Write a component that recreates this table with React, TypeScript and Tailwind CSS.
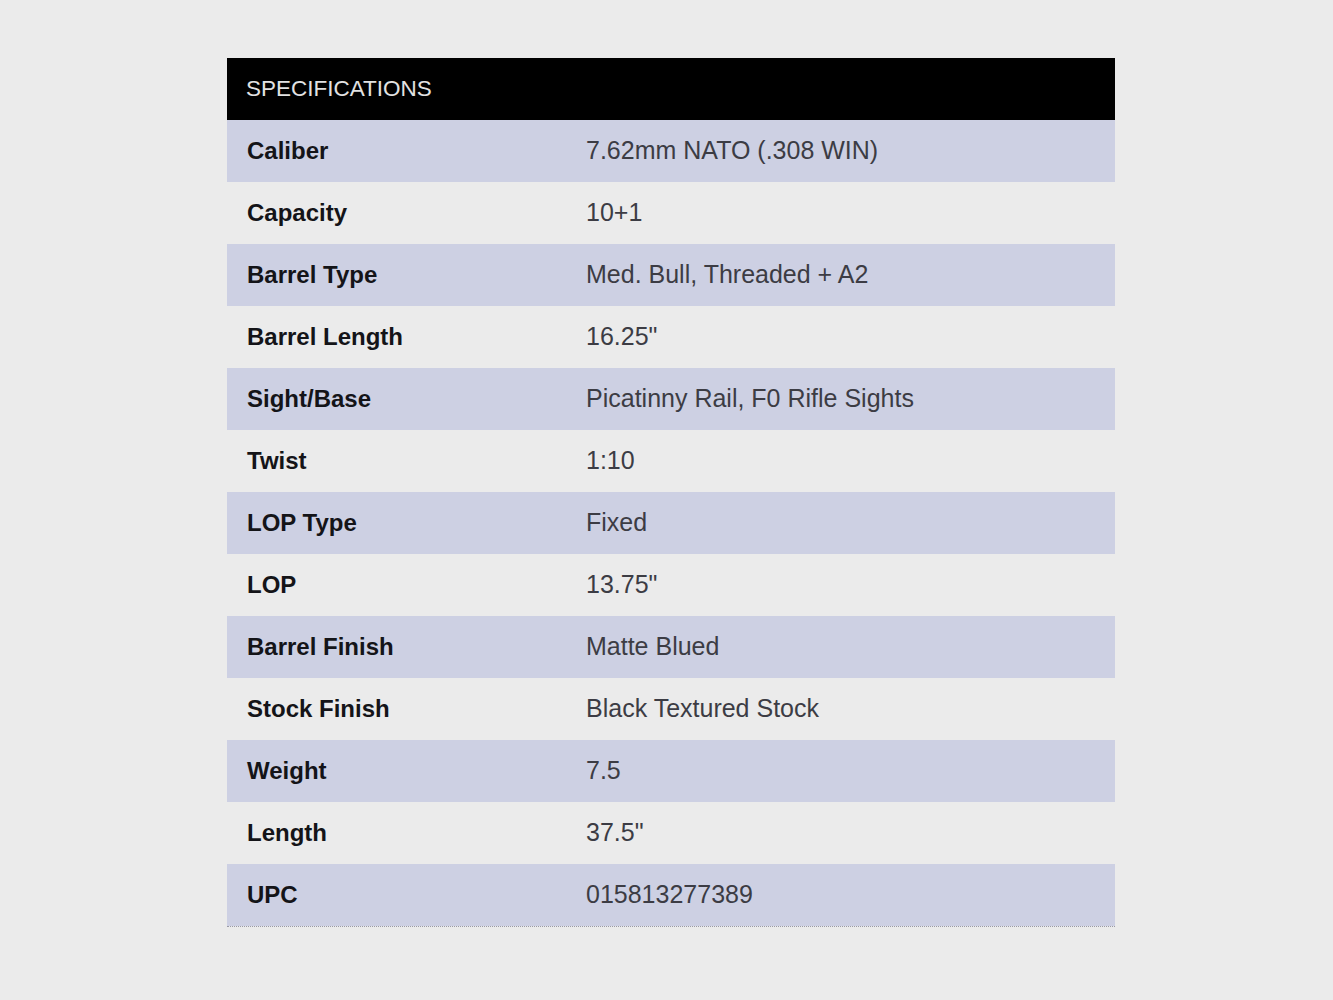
const specs: [string, string][] = [
  ["Caliber", "7.62mm NATO (.308 WIN)"],
  ["Capacity", "10+1"],
  ["Barrel Type", "Med. Bull, Threaded + A2"],
  ["Barrel Length", '16.25"'],
  ["Sight/Base", "Picatinny Rail, F0 Rifle Sights"],
  ["Twist", "1:10"],
  ["LOP Type", "Fixed"],
  ["LOP", '13.75"'],
  ["Barrel Finish", "Matte Blued"],
  ["Stock Finish", "Black Textured Stock"],
  ["Weight", "7.5"],
  ["Length", '37.5"'],
  ["UPC", "015813277389"],
];

export default function App() {
  return (
    <div className="min-h-[1000px] w-full bg-[#ebebeb] pl-[227px] pt-[58px] font-['Liberation_Sans',Arial,sans-serif]">
      <div className="w-[888px]">
        <div className="flex h-[62px] items-center bg-black pl-[19px] text-[22.5px] text-[#e2e2e2]">
          SPECIFICATIONS
        </div>
        <div className="border-b border-dotted border-[#9a9aa6]">
          {specs.map(([label, value], i) => (
            <div
              key={label}
              className={`flex h-[62px] items-center ${i % 2 === 0 ? "bg-[#cdd0e3]" : "bg-[#ebebeb]"}`}
            >
              <div className="w-[359px] pl-[20px] text-[24px] font-bold text-[#141418]">{label}</div>
              <div className="text-[25px] text-[#3c3c44]">{value}</div>
            </div>
          ))}
        </div>
      </div>
    </div>
  );
}
